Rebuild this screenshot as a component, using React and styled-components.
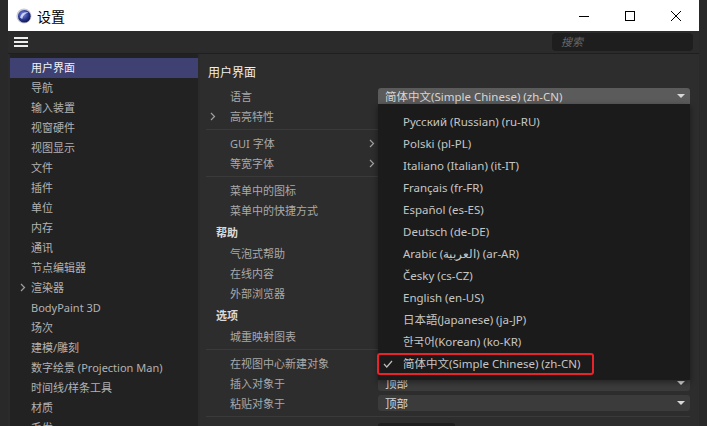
import React from 'react'
import styled, { createGlobalStyle } from 'styled-components'

const GlobalStyle = createGlobalStyle`
  html, body {
    margin: 0;
    padding: 0;
    background: #292929;
    overflow: hidden;
  }
  body {
    font-family: "Noto Sans", "Noto Sans CJK SC", sans-serif;
  }
`

const Desktop = styled.div`
  height: 426px;
  padding: 0 8px;
  display: flex;
  background: #292929;
`

const Window = styled.div`
  width: 691px;
  display: flex;
  flex-direction: column;
  background: #2b2b2b;
  overflow: hidden;
`

const TitleBar = styled.div`
  height: 31px;
  flex: none;
  background: #ffffff;
  display: flex;
  align-items: center;
  padding-left: 8px;
`

const TitleText = styled.span`
  margin-left: 5px;
  font-size: 14px;
  color: #000;
  font-family: "Noto Sans CJK SC", sans-serif;
`

const WinControls = styled.div`
  margin-left: auto;
  display: flex;
  height: 100%;
`

const WinButton = styled.div`
  width: 46px;
  height: 100%;
  display: flex;
  align-items: center;
  justify-content: center;
  color: #000;
`

const Toolbar = styled.div`
  height: 22px;
  flex: none;
  display: flex;
  align-items: center;
  padding: 0 6px;
  border-bottom: 1px solid #1f1f1f;
`

const Burger = styled.div`
  width: 14px;
  display: flex;
  flex-direction: column;
  gap: 2px;
  span {
    height: 2px;
    background: #ededed;
  }
`

const Search = styled.div`
  margin-left: auto;
  width: 141px;
  height: 18px;
  border-radius: 4px;
  background: #1e1e1e;
  box-sizing: border-box;
  padding-left: 9px;
  font-size: 11px;
  line-height: 18px;
  font-style: italic;
  color: #686868;
`

const Main = styled.div`
  flex: 1;
  min-height: 0;
  display: flex;
  gap: 2px;
  padding-left: 2px;
`

const Sidebar = styled.div`
  width: 188px;
  flex: none;
  background: #222222;
  padding-top: 4px;
  overflow: hidden;
`

const NavItem = styled.div`
  height: 20px;
  display: flex;
  align-items: center;
  font-size: 11px;
  line-height: 18px;
  padding-bottom: 1px;
  box-sizing: border-box;
  color: ${p => (p.$active ? '#f2f2f2' : '#b2b2b2')};
  background: ${p => (p.$active ? '#3e4172' : 'transparent')};
  white-space: nowrap;
`

const Lead = styled.span`
  width: ${p => p.$w}px;
  flex: none;
  display: flex;
  align-items: center;
  padding-left: ${p => p.$pad || 0}px;
  box-sizing: border-box;
  color: #a0a0a0;
`

const Content = styled.div`
  flex: 1;
  background: #2d2d2d;
  padding: 10px 9px 0 6px;
  overflow: hidden;
`

const PageTitle = styled.div`
  height: 18px;
  line-height: 18px;
  padding-left: 2px;
  margin-bottom: 4px;
  font-size: 12px;
  color: #f0f0f0;
`

const Row = styled.div`
  height: 20px;
  display: grid;
  grid-template-columns: 172px 1fr;
  align-items: center;
`

const Label = styled.div`
  display: flex;
  align-items: center;
  font-size: 11px;
  color: #a9a9a9;
  white-space: nowrap;
`

const RightChevron = styled.span`
  margin-left: auto;
  margin-right: 3px;
  display: flex;
  color: #a0a0a0;
`

const Group = styled.div`
  height: 20px;
  line-height: 20px;
  margin-top: 3px;
  padding-left: 10px;
  font-size: 11px;
  font-weight: 700;
  color: #dadada;
`

const Divider = styled.div`
  height: 1px;
  margin: 3px 0;
  background: #3a3a3a;
`

const SelectBox = styled.div`
  position: relative;
  height: 16px;
  border-radius: 3px;
  background: ${p => (p.$open ? '#5b5b5b' : '#3b3b3b')};
  border-bottom-left-radius: ${p => (p.$open ? 0 : 3)}px;
  border-bottom-right-radius: ${p => (p.$open ? 0 : 3)}px;
  display: flex;
  align-items: center;
  padding: 0 5px 0 7px;
  font-size: 11.5px;
  color: #d6d6d6;
  white-space: nowrap;
`

const Caret = styled.span`
  margin-left: auto;
  width: 0;
  height: 0;
  border-left: 4px solid transparent;
  border-right: 4px solid transparent;
  border-top: 4px solid #d8d8d8;
`

const Field = styled.div`
  margin-top: 3px;
  width: 77px;
  height: 20px;
  border-radius: 3px;
  background: #1e1e1e;
`

const Popup = styled.div`
  position: absolute;
  top: 100%;
  left: 0;
  right: 0;
  z-index: 5;
  background: #1b1b1b;
  padding: 7px 0 5px;
  box-shadow: 0 2px 6px rgba(0, 0, 0, 0.45);
`

const Option = styled.div`
  position: relative;
  height: 22px;
  line-height: 22px;
  padding-left: 25px;
  font-size: 11.5px;
  color: #c6c6c6;
`

const Check = styled.span`
  position: absolute;
  left: 5px;
  top: 0;
  height: 22px;
  display: flex;
  align-items: center;
  color: #bdbdbd;
`

const Highlight = styled.span`
  position: absolute;
  left: -1px;
  top: 0;
  width: 217px;
  height: 22px;
  box-sizing: border-box;
  border: 2px solid #e8232a;
  border-radius: 3px;
`

const Chevron = () => (
  <svg width="6" height="9" viewBox="0 0 6 9">
    <polyline points="1,1 4.5,4.5 1,8" fill="none" stroke="currentColor" strokeWidth="1.2" />
  </svg>
)

const Logo = () => (
  <svg width="16" height="16" viewBox="0 0 16 16">
    <defs>
      <radialGradient id="ball" cx="0.4" cy="0.35" r="0.7">
        <stop offset="0" stopColor="#7f8fe0" />
        <stop offset="0.6" stopColor="#2a3690" />
        <stop offset="1" stopColor="#0d1240" />
      </radialGradient>
    </defs>
    <circle cx="8" cy="8" r="7.6" fill="#c9ccd6" />
    <circle cx="8.3" cy="8.3" r="6.3" fill="url(#ball)" />
    <path d="M4 9.5 C5 5 9 3.5 12.5 4.5 C9.5 5 7 7 6.2 11 Z" fill="#dfe4ff" opacity="0.85" />
  </svg>
)

const nav = [
  '用户界面', '导航', '输入装置', '视窗硬件', '视图显示', '文件', '插件', '单位', '内存',
  '通讯', '节点编辑器', '渲染器', 'BodyPaint 3D', '场次', '建模/雕刻',
  '数字绘景 (Projection Man)', '时间线/样条工具', '材质', '毛发'
]

const languages = [
  'Русский (Russian) (ru-RU)',
  'Polski (pl-PL)',
  'Italiano (Italian) (it-IT)',
  'Français (fr-FR)',
  'Español (es-ES)',
  'Deutsch (de-DE)',
  'Arabic (العربية) (ar-AR)',
  'Česky (cs-CZ)',
  'English (en-US)',
  '日本語(Japanese) (ja-JP)',
  '한국어(Korean) (ko-KR)',
  '简体中文(Simple Chinese) (zh-CN)'
]

const Setting = ({ label, arrow, sub, children }) => (
  <Row>
    <Label>
      <Lead $w={24} $pad={4}>{arrow ? <Chevron /> : null}</Lead>
      {label}
      {sub ? <RightChevron><Chevron /></RightChevron> : null}
    </Label>
    <div>{children}</div>
  </Row>
)

export default function App () {
  const current = languages[languages.length - 1]
  return (
    <>
      <GlobalStyle />
      <Desktop>
        <Window>
          <TitleBar>
            <Logo />
            <TitleText>设置</TitleText>
            <WinControls>
              <WinButton>
                <svg width="10" height="10" viewBox="0 0 10 10"><line x1="0" y1="5.5" x2="10" y2="5.5" stroke="#000" /></svg>
              </WinButton>
              <WinButton>
                <svg width="10" height="10" viewBox="0 0 10 10"><rect x="0.5" y="0.5" width="9" height="9" fill="none" stroke="#000" /></svg>
              </WinButton>
              <WinButton>
                <svg width="10" height="10" viewBox="0 0 10 10"><path d="M0 0 L10 10 M10 0 L0 10" stroke="#000" /></svg>
              </WinButton>
            </WinControls>
          </TitleBar>
          <Toolbar>
            <Burger><span /><span /><span /></Burger>
            <Search>搜索</Search>
          </Toolbar>
          <Main>
            <Sidebar>
              {nav.map((name, i) => (
                <NavItem key={name} $active={i === 0}>
                  <Lead $w={21} $pad={10}>{name === '渲染器' ? <Chevron /> : null}</Lead>
                  {name}
                </NavItem>
              ))}
            </Sidebar>
            <Content>
              <PageTitle>用户界面</PageTitle>
              <Setting label="语言">
                <SelectBox $open>
                  {current}
                  <Caret />
                  <Popup>
                    {languages.map(lang => (
                      <Option key={lang}>
                        {lang === current ? (
                          <>
                            <Check>
                              <svg width="10" height="8" viewBox="0 0 10 8"><polyline points="1,4 3.8,7 9,1" fill="none" stroke="currentColor" strokeWidth="1.2" /></svg>
                            </Check>
                            <Highlight />
                          </>
                        ) : null}
                        {lang}
                      </Option>
                    ))}
                  </Popup>
                </SelectBox>
              </Setting>
              <Setting label="高亮特性" arrow />
              <Divider />
              <Setting label="GUI 字体" sub />
              <Setting label="等宽字体" sub />
              <Divider />
              <Setting label="菜单中的图标" />
              <Setting label="菜单中的快捷方式" />
              <Group>帮助</Group>
              <Setting label="气泡式帮助" />
              <Setting label="在线内容" />
              <Setting label="外部浏览器" />
              <Group>选项</Group>
              <Setting label="城重映射图表" />
              <Divider />
              <Setting label="在视图中心新建对象" />
              <Setting label="插入对象于">
                <SelectBox>顶部<Caret /></SelectBox>
              </Setting>
              <Setting label="粘贴对象于">
                <SelectBox>顶部<Caret /></SelectBox>
              </Setting>
              <Divider />
              <Row>
                <div />
                <div><Field /></div>
              </Row>
            </Content>
          </Main>
        </Window>
      </Desktop>
    </>
  )
}
